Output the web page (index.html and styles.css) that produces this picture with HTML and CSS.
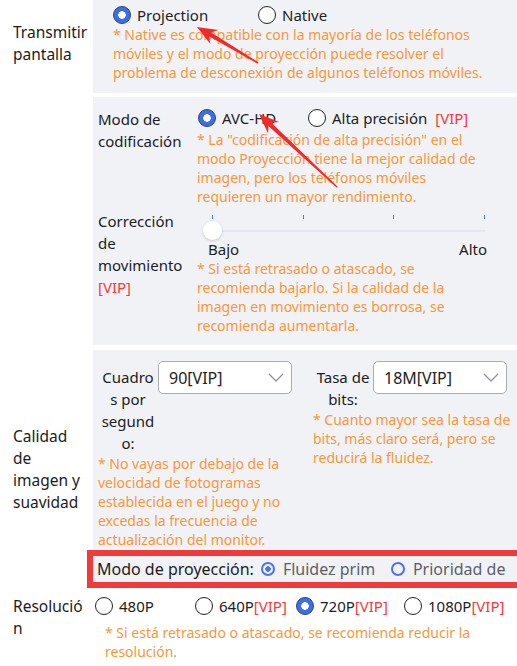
FILE: index.html
```html
<!DOCTYPE html>
<html lang="es">
<head>
  <meta charset="UTF-8">
  <title>Ajustes de proyección</title>
  <meta name="viewport" content="width=device-width, initial-scale=1.0">
  <link rel="stylesheet" href="styles.css">
</head>
<body>

  <div class="settings">

    <div class="row row-stream">
      <div class="label">Transmitir pantalla</div>
      <div class="panel panel-stream">
        <div class="options options-stream">
          <label class="radio"><span class="dot checked"></span><span>Projection</span></label>
          <label class="radio"><span class="dot"></span><span>Native</span></label>
        </div>
        <p class="note">* Native es compatible con la mayoría de los teléfonos móviles y el modo de proyección puede resolver el problema de desconexión de algunos teléfonos móviles.</p>
      </div>
    </div>

    <div class="row row-encode">
      <div class="label"></div>
      <div class="panel panel-encode">
        <div class="sub-row">
          <div class="sub-label">Modo de codificación</div>
          <div class="sub-body">
            <div class="options options-encode">
              <label class="radio"><span class="dot checked"></span><span>AVC-HD</span></label>
              <label class="radio"><span class="dot"></span><span>Alta precisión<span class="vip vip-gap">[VIP]</span></span></label>
            </div>
            <p class="note">* La "codificación de alta precisión" en el modo Proyección tiene la mejor calidad de imagen, pero los teléfonos móviles requieren un mayor rendimiento.</p>
          </div>
        </div>

        <div class="sub-row">
          <div class="sub-label">Corrección de movimiento <span class="vip">[VIP]</span></div>
          <div class="sub-body">
            <div class="slider">
              <div class="ticks">
                <span class="tick"></span>
                <span class="tick"></span>
                <span class="tick"></span>
                <span class="tick"></span>
              </div>
              <div class="track"><span class="thumb"></span></div>
              <div class="scale"><span>Bajo</span><span>Alto</span></div>
            </div>
            <p class="note">* Si está retrasado o atascado, se recomienda bajarlo. Si la calidad de la imagen en movimiento es borrosa, se recomienda aumentarla.</p>
          </div>
        </div>
      </div>
    </div>

    <div class="row row-quality">
      <div class="label">Calidad de imagen y suavidad</div>
      <div class="quality">
        <div class="panel panel-quality">
          <div class="field">
            <div class="field-head">
              <div class="field-label">Cuadros por segundo:</div>
              <div class="select">
                <span>90[VIP]</span>
                <svg class="chevron" width="16" height="9" viewBox="0 0 16 9"><path d="M1 1l7 7 7-7" fill="none" stroke="#8d929b" stroke-width="1.3"/></svg>
              </div>
            </div>
            <p class="note">* No vayas por debajo de la velocidad de fotogramas establecida en el juego y no excedas la frecuencia de actualización del monitor.</p>
          </div>
          <div class="field">
            <div class="field-head">
              <div class="field-label">Tasa de bits:</div>
              <div class="select">
                <span>18M[VIP]</span>
                <svg class="chevron" width="16" height="9" viewBox="0 0 16 9"><path d="M1 1l7 7 7-7" fill="none" stroke="#8d929b" stroke-width="1.3"/></svg>
              </div>
            </div>
            <p class="note">* Cuanto mayor sea la tasa de bits, más claro será, pero se reducirá la fluidez.</p>
          </div>
        </div>

        <div class="mode-box">
          <span class="mode-title">Modo de proyección:</span>
          <label class="mode-opt"><span class="ring on"></span><span class="mode-text">Fluidez primero</span></label>
          <label class="mode-opt"><span class="ring"></span><span class="mode-text">Prioridad de calidad</span></label>
        </div>
      </div>
    </div>

    <div class="row row-res">
      <div class="label label-top">Resolución</div>
      <div class="res-body">
        <div class="options options-res">
          <label class="radio"><span class="dot"></span><span>480P</span></label>
          <label class="radio"><span class="dot"></span><span>640P<span class="vip">[VIP]</span></span></label>
          <label class="radio"><span class="dot checked"></span><span>720P<span class="vip">[VIP]</span></span></label>
          <label class="radio"><span class="dot"></span><span>1080P<span class="vip">[VIP]</span></span></label>
        </div>
        <p class="note note-res">* Si está retrasado o atascado, se recomienda reducir la resolución.</p>
      </div>
    </div>

  </div>

  <svg class="arrows" width="517" height="666" viewBox="0 0 517 666">
    <polygon points="258.4,62.3 211.1,32.5 218.4,30.0 197,27 210.4,43.9 208.9,36.3 257.6,63.7"/>
    <polygon points="337.5,186.4 271.4,122.7 279.1,121.9 259,114 268.1,133.5 268.4,125.9 336.5,187.6"/>
  </svg>

</body>
</html>
```

FILE: styles.css
```css
* {
  box-sizing: border-box;
}

body {
  margin: 0;
  font-family: "Noto Sans", "Noto Sans CJK SC", sans-serif;
  font-size: 15px;
  color: #1c1c1c;
  background: #fff;
  overflow: hidden;
}

.settings {
  width: 517px;
  margin-top: -7px;
}

.row {
  display: flex;
}

.row-encode {
  margin-top: 4px;
}

.row-quality {
  margin-top: 5px;
}

.row-res {
  margin-top: 7px;
}

.label {
  flex: none;
  width: 93px;
  padding: 0 4.5px 0 13px;
  display: flex;
  align-items: center;
  font-size: 15.5px;
  line-height: 22px;
  overflow-wrap: anywhere;
}

.label-top {
  align-self: flex-start;
}

.panel {
  flex: 1;
  background: #f0f2f6;
}

.note {
  margin: 0;
  font-size: 14px;
  line-height: 19px;
  color: #f5983a;
}

.vip {
  color: #f23b3b;
}

.vip-gap {
  margin-left: 8px;
}

/* radios */

.options {
  display: grid;
  align-items: center;
  height: 20px;
}

.radio {
  display: flex;
  align-items: center;
  gap: 6px;
  white-space: nowrap;
  color: #222;
}

.dot {
  flex: none;
  width: 18px;
  height: 18px;
  border-radius: 50%;
  border: 1px solid #222;
  background: #fff;
}

.dot.checked {
  border-color: #2b3f7a;
  background: radial-gradient(circle, #fff 0 3.5px, #3d6ee6 4px);
}

/* screen stream */

.panel-stream {
  padding: 12px 14px 11px 20px;
}

.options-stream {
  grid-template-columns: 145px auto;
}

/* encoding */

.panel-encode {
  padding: 11px 24px 10px 5px;
}

.sub-row {
  display: flex;
}

.sub-row + .sub-row {
  margin-top: 4px;
}

.sub-label {
  flex: none;
  width: 99px;
  padding-right: 3px;
  line-height: 22px;
  overflow-wrap: anywhere;
}

.sub-body {
  flex: 1;
}

.options-encode {
  grid-template-columns: 110px auto;
  padding-left: 1px;
  margin-bottom: 2px;
}

.slider {
  margin: 5px 8px 0 15px;
}

.ticks {
  display: flex;
  justify-content: space-between;
  height: 4px;
}

.tick {
  width: 1px;
  height: 4px;
  background: #4a7cf0;
}

.track {
  position: relative;
  height: 2px;
  margin-top: 11px;
  background: #e4e7ed;
}

.thumb {
  position: absolute;
  left: -9.5px;
  top: -9px;
  width: 19px;
  height: 19px;
  border-radius: 50%;
  background: #fff;
  box-shadow: 0 1px 3px rgba(0, 0, 0, 0.18);
}

.scale {
  display: flex;
  justify-content: space-between;
  margin: 7px -2px 0 -4px;
  line-height: 20px;
  color: #222;
}

/* quality */

.quality {
  flex: 1;
  display: flex;
  flex-direction: column;
}

.panel-quality {
  display: grid;
  grid-template-columns: 194px 1fr;
  column-gap: 21px;
  padding: 11px 0 0 5px;
}

.field-head {
  display: flex;
  align-items: flex-start;
}

.field-label {
  flex: none;
  width: 60px;
  padding: 5px 3px 0;
  text-align: center;
  line-height: 22px;
  overflow-wrap: anywhere;
}

.select {
  flex: none;
  width: 134px;
  height: 33px;
  display: flex;
  align-items: center;
  justify-content: space-between;
  padding: 0 7px 0 10px;
  border: 1px solid #a8acb3;
  border-radius: 5px;
  background: #fff;
  font-size: 16px;
  color: #222;
}

.mode-box {
  display: flex;
  align-items: center;
  height: 38px;
  margin: 1px 2px 0 -6px;
  padding-left: 4px;
  border: 6px solid #f13a3a;
  background: #f0f2f6;
  font-size: 16px;
  white-space: nowrap;
  overflow: hidden;
}

.mode-title {
  flex: none;
  margin-right: 7px;
}

.mode-opt {
  flex: none;
  display: flex;
  align-items: center;
  gap: 8px;
  width: 115px;
  margin-right: 15px;
  overflow: hidden;
}

.ring {
  flex: none;
  width: 14px;
  height: 14px;
  border: 2px solid #4c74e6;
  border-radius: 50%;
}

.ring.on {
  background: radial-gradient(circle, #4c74e6 0 2.5px, transparent 3px);
}

.mode-text {
  color: #5b5f66;
}

/* resolution */

.res-body {
  flex: 1;
  padding-left: 2px;
}

.options-res {
  grid-template-columns: 100px 101px 108px auto;
  height: 22px;
}

.note-res {
  margin-top: 6px;
  padding-left: 10px;
}

.arrows {
  position: absolute;
  left: 0;
  top: 0;
  pointer-events: none;
  fill: #ee2b2b;
}
```
